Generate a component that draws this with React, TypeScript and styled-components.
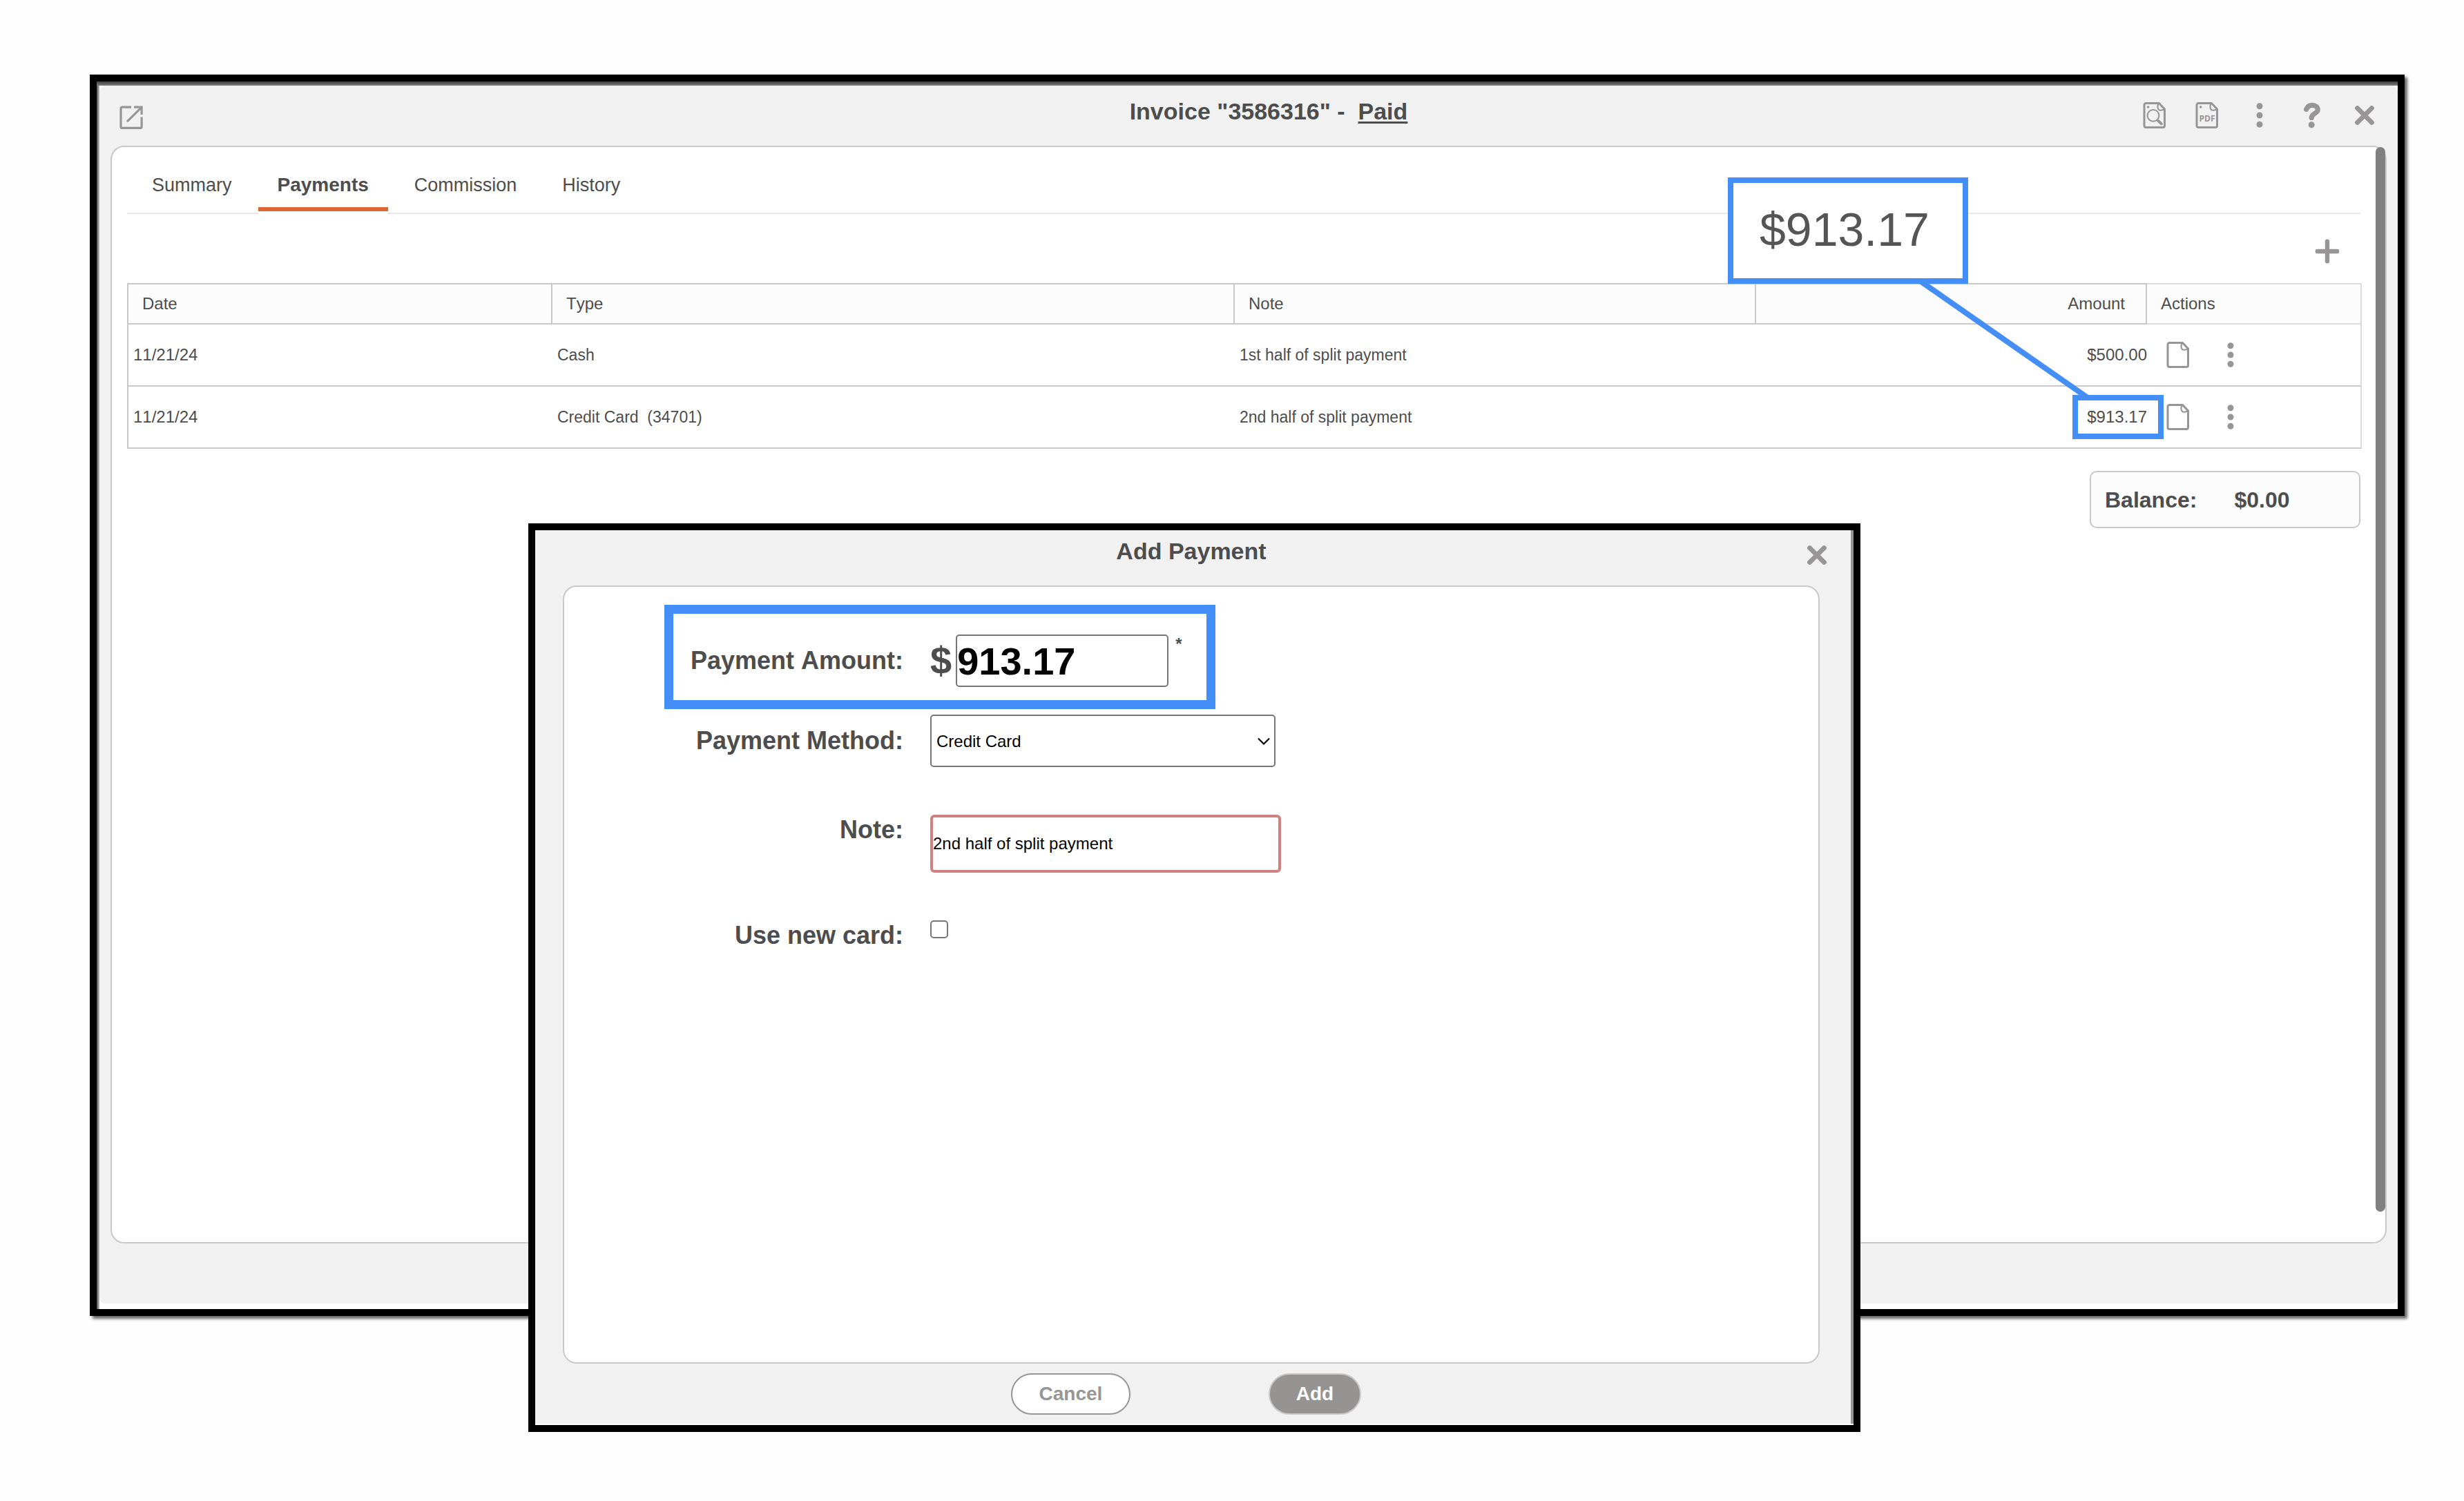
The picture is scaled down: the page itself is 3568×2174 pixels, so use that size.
import React from "react";
import styled, { createGlobalStyle, css } from "styled-components";

const ink = "#4d4d4d";
const iconGrey = "#979595";
const line = "#c9c9c9";
const paleLine = "#dcdcdc";
const chrome = "#f1f1f1";
const accent = "#438ff7";

const GlobalStyle = createGlobalStyle`
  *, *::before, *::after { box-sizing: border-box; }
  body {
    margin: 0;
    background: #fefefe;
    color: ${ink};
    font-family: "Liberation Sans", Arial, Helvetica, sans-serif;
    font-size: 24px;
    font-kerning: none;
  }
  button, input, select { font-family: inherit; }
`;

const Page = styled.div`
  position: relative;
  display: flex;
  flex-direction: column;
  min-height: 100vh;
  padding: 108px 86px 268px 130px;
`;

const InvoiceWindow = styled.section`
  flex: 1;
  display: flex;
  padding: 6px 0 8px 4px;
  border: 10px solid #000;
  background:
    linear-gradient(to bottom, #404040, #7c7c7c) top / 100% 6px no-repeat,
    linear-gradient(to right, #4a4a4a, #c4c4c4) left / 4px 100% no-repeat,
    #fff;
  box-shadow: 4px 4px 4px rgba(0, 0, 0, 0.6);
`;

const Dialog = styled.section`
  position: absolute;
  top: 758px;
  right: 874px;
  bottom: 100px;
  left: 765px;
  display: flex;
  padding: 0 4px 2px 0;
  border: 10px solid #000;
  background:
    linear-gradient(#fff, #fff) bottom / 100% 2px no-repeat,
    #969696;
`;

const Frame = styled.div<{ $radius?: number }>`
  flex: 1;
  min-width: 0;
  display: flex;
  flex-direction: column;
  border-radius: ${(p) => p.$radius ?? 0}px;
  background: ${chrome};
`;

const Header = styled.header<{ $dialog?: boolean }>`
  display: grid;
  grid-template-columns: 1fr auto 1fr;
  align-items: start;
  height: ${(p) => (p.$dialog ? 80 : 87)}px;
  padding: ${(p) => (p.$dialog ? "16px 29px 0 24px" : "23px 28px 0 26px")};
`;

const Title = styled.h1<{ $indent?: number }>`
  grid-column: 2;
  margin: 0;
  padding-left: ${(p) => p.$indent ?? 0}px;
  font-size: 34px;
  line-height: 28px;
  font-weight: 700;
  white-space: pre;
`;

const StatusLink = styled.a`
  color: inherit;
  text-decoration: underline;
  text-decoration-thickness: 3px;
  text-underline-offset: 3px;
`;

const IconRow = styled.div`
  display: flex;
  justify-content: flex-end;
  gap: 36px;
`;

const IconButton = styled.button`
  display: block;
  width: 40px;
  height: 40px;
  padding: 0;
  border: 0;
  background: none;
  color: ${iconGrey};
  cursor: pointer;

  svg {
    display: block;
    overflow: visible;
  }
`;

const cardBase = css`
  flex: 1;
  display: flex;
  flex-direction: column;
  border: 2px solid ${line};
  border-radius: 20px;
  background: #fff;
`;

const InvoiceCard = styled.div`
  ${cardBase}
  position: relative;
  margin: 0 16px 87px;
  padding: 39px 34px 39px 22px;
`;

const ScrollThumb = styled.div`
  position: absolute;
  top: 0;
  right: 0;
  bottom: 44px;
  width: 14px;
  border-radius: 7px;
  background: #808080;
`;

const Tabs = styled.nav`
  display: flex;
  gap: 10px;
  margin-right: 2px;
  padding: 0 8px 2px;
  border-bottom: 2px solid #e8e8e8;
`;

const Tab = styled.button<{ $active?: boolean }>`
  padding: 0 28px 16px;
  border: 0;
  border-bottom: 6px solid ${(p) => (p.$active ? "#dc6636" : "transparent")};
  background: none;
  box-shadow: ${(p) => (p.$active ? "0 4px 0 #fff" : "none")};
  color: ${ink};
  font-size: ${(p) => (p.$active ? 28 : 27)}px;
  line-height: 32px;
  font-weight: ${(p) => (p.$active ? 700 : 400)};
  cursor: pointer;
`;

const Toolbar = styled.div`
  display: flex;
  justify-content: flex-end;
  padding: 34px 30px 26px;
`;

const Table = styled.table`
  width: 100%;
  table-layout: fixed;
  border-collapse: separate;
  border-spacing: 0;
  line-height: 28px;
`;

const Th = styled.th<{ $end?: boolean; $pale?: boolean }>`
  height: 60px;
  padding: 0 ${(p) => (p.$end ? 30 : 20)}px 0 20px;
  border: 2px solid ${(p) => (p.$pale ? paleLine : line)};
  border-left-width: 0;
  background: #fcfcfc;
  font-weight: 400;
  text-align: ${(p) => (p.$end ? "right" : "left")};

  &:first-child {
    border-left-width: 2px;
  }
`;

const Td = styled.td<{ $end?: boolean; $words?: boolean }>`
  position: relative;
  height: 90px;
  padding: 0 0 0 7px;
  border-bottom: 2px solid ${line};
  font-size: ${(p) => (p.$words ? 23 : 24)}px;
  text-align: ${(p) => (p.$end ? "right" : "left")};
  white-space: pre;

  &:first-child {
    border-left: 2px solid ${line};
  }
  &:last-child {
    padding-left: 25px;
    border-right: 2px solid ${paleLine};
  }
`;

const Col = styled.col<{ $width?: number }>`
  width: ${(p) => (p.$width ? `${p.$width}px` : "auto")};
`;

const RowActions = styled.div`
  display: flex;
  gap: 36px;
`;

const Balance = styled.div`
  align-self: flex-end;
  display: flex;
  align-items: center;
  gap: 54px;
  width: 392px;
  height: 83px;
  margin: 32px 2px 0 0;
  padding: 0 20px;
  border: 2px solid ${line};
  border-radius: 10px;
  background: #fcfcfc;
  font-size: 32px;
  line-height: 36px;
  font-weight: 700;
`;

/* Annotations that sit over the table cell and the form row they point at. */
const CellMarker = styled.div`
  position: absolute;
  top: 12px;
  right: -24px;
  width: 132px;
  height: 64px;
  border: 8px solid ${accent};
`;

const Callout = styled.div`
  position: absolute;
  right: 259px;
  bottom: 237px;
  width: 348px;
  height: 154px;
  padding-left: 38px;
  border: 8px solid ${accent};
  background: #fff;
  color: #555;
  font-size: 68px;
  line-height: 134px;
  text-align: left;
`;

const Connector = styled.svg`
  position: absolute;
  top: -150px;
  right: 84px;
  overflow: visible;
`;

const FieldMarker = styled.div`
  position: absolute;
  top: -43px;
  left: 145px;
  width: 798px;
  height: 151px;
  border: 13px solid ${accent};
  pointer-events: none;
`;

const FormCard = styled.form`
  ${cardBase}
  margin: 0 45px 0 40px;
`;

const FieldRow = styled.div<{ $gap?: number; $top?: boolean }>`
  position: relative;
  display: grid;
  grid-template-columns: 491px 1fr;
  column-gap: 39px;
  align-items: ${(p) => (p.$top ? "start" : "center")};
  margin-top: ${(p) => p.$gap ?? 69}px;
`;

const Label = styled.label`
  font-size: 36px;
  line-height: 44px;
  font-weight: 700;
  text-align: right;
`;

const AmountField = styled.div`
  display: flex;
  align-items: center;
`;

const Currency = styled.span`
  margin-right: 6px;
  font-size: 56px;
  line-height: 60px;
  font-weight: 700;
`;

const Required = styled.span`
  align-self: flex-start;
  margin-left: 10px;
  line-height: 28px;
  font-weight: 700;
`;

const fieldBase = css`
  border: 2px solid #767676;
  border-radius: 5px;
  background: #fff;
  color: #000;
  outline: none;
`;

const AmountInput = styled.input`
  ${fieldBase}
  width: 308px;
  height: 76px;
  padding: 0;
  font-size: 56px;
  font-weight: 700;
`;

const SelectWrap = styled.div`
  position: relative;
  width: 500px;

  svg {
    position: absolute;
    top: 33px;
    right: 8px;
    pointer-events: none;
  }
`;

const Select = styled.select`
  ${fieldBase}
  display: block;
  appearance: none;
  width: 100%;
  height: 76px;
  padding: 0 40px 0 7px;
  font-size: 24px;
`;

const NoteInput = styled.input`
  ${fieldBase}
  width: 508px;
  height: 84px;
  padding: 0;
  border: 4px solid #d08080;
  border-radius: 6px;
  font-size: 24px;
`;

const Checkbox = styled.input`
  ${fieldBase}
  appearance: none;
  width: 26px;
  height: 26px;
  margin: 0;

  &:checked {
    background: #767676;
  }
`;

const Footer = styled.footer`
  display: flex;
  justify-content: center;
  gap: 200px;
  height: 87px;
  padding: 14px 20px 0 0;
`;

const PillButton = styled.button<{ $primary?: boolean }>`
  width: ${(p) => (p.$primary ? 134 : 173)}px;
  height: 60px;
  padding: 0;
  border: 2px solid ${(p) => (p.$primary ? line : iconGrey)};
  border-radius: 30px;
  background: ${(p) => (p.$primary ? "#969393" : "#fff")};
  color: ${(p) => (p.$primary ? "#fff" : iconGrey)};
  font-size: 28px;
  line-height: 32px;
  font-weight: 700;
  cursor: pointer;
`;

const Icon = ({ children }: { children: React.ReactNode }) => (
  <svg
    width="40"
    height="40"
    viewBox="0 0 40 40"
    fill="none"
    stroke="currentColor"
    strokeLinecap="round"
    strokeLinejoin="round"
    aria-hidden="true"
  >
    {children}
  </svg>
);

const Sheet = () => (
  <>
    <path
      d="M7.5 2.5H26.5L34.5 11V35A2.5 2.5 0 0 1 32 37.5H7.5A2.5 2.5 0 0 1 5 35V5A2.5 2.5 0 0 1 7.5 2.5Z"
      strokeWidth="3"
    />
    <path d="M26 3C23.4 6 24 12.6 28.6 12.8C31 12.9 33 12 34.4 10.8" strokeWidth="2" />
  </>
);

const Dots = () => (
  <Icon>
    <g fill="currentColor" stroke="none">
      <circle cx="20" cy="6.7" r="4.5" />
      <circle cx="20" cy="20" r="4.5" />
      <circle cx="20" cy="33.3" r="4.5" />
    </g>
  </Icon>
);

const Cross = () => (
  <Icon>
    <path d="M9.6 9.6L30.4 30.4M30.4 9.6L9.6 30.4" strokeWidth="7" />
  </Icon>
);

const OpenIcon = () => (
  <Icon>
    <g strokeWidth="3.2" strokeLinecap="butt" strokeLinejoin="miter">
      <path d="M20 8.2H7A2 2 0 0 0 5 10.2V36.4A2 2 0 0 0 7 38.4H33.1A2 2 0 0 0 35.1 36.4V22.6" />
      <path d="M24 8.2H35.1V19" />
      <path d="M35 8.4L14 29.2" />
    </g>
  </Icon>
);

const payments = [
  { date: "11/21/24", type: "Cash", note: "1st half of split payment", amount: "$500.00", marked: false },
  { date: "11/21/24", type: "Credit Card  (34701)", note: "2nd half of split payment", amount: "$913.17", marked: true },
];

export default function App() {
  return (
    <>
      <GlobalStyle />
      <Page>
        <InvoiceWindow>
          <Frame $radius={8}>
            <Header>
              <IconButton aria-label="Open in new window">
                <OpenIcon />
              </IconButton>
              <Title $indent={60}>
                {'Invoice "3586316" -  '}
                <StatusLink href="#status">Paid</StatusLink>
              </Title>
              <IconRow>
                <IconButton aria-label="Preview">
                  <Icon>
                    <Sheet />
                    <circle cx="10.7" cy="8" r="1.8" fill="currentColor" stroke="none" />
                    <circle cx="18" cy="20.3" r="8.4" strokeWidth="2" />
                    <path d="M25.2 28L29.8 32.4" strokeWidth="4" />
                  </Icon>
                </IconButton>
                <IconButton aria-label="Download PDF">
                  <Icon>
                    <Sheet />
                    <circle cx="10.7" cy="8" r="1.8" fill="currentColor" stroke="none" />
                    <text
                      x="20"
                      y="28.6"
                      textAnchor="middle"
                      fontFamily="Open Sans, sans-serif"
                      fontSize="12"
                      fontWeight="700"
                      fill="currentColor"
                      stroke="none"
                    >
                      PDF
                    </text>
                  </Icon>
                </IconButton>
                <IconButton aria-label="More">
                  <Dots />
                </IconButton>
                <IconButton aria-label="Help">
                  <Icon>
                    <path
                      d="M11.6 11.4C13.4 6.8 17 5.3 20.3 5.3C25 5.3 28.3 8 28.3 12C28.3 17.6 19.2 17 19.2 23.4"
                      strokeWidth="7.2"
                    />
                    <circle cx="19.2" cy="33.8" r="4.5" fill="currentColor" stroke="none" />
                  </Icon>
                </IconButton>
                <IconButton aria-label="Close invoice">
                  <Cross />
                </IconButton>
              </IconRow>
            </Header>

            <InvoiceCard>
              <Tabs>
                <Tab>Summary</Tab>
                <Tab $active>Payments</Tab>
                <Tab>Commission</Tab>
                <Tab>History</Tab>
              </Tabs>
              <Toolbar>
                <IconButton aria-label="Add payment">
                  <Icon>
                    <path d="M20 5.8V34.2M5.8 20H34.2" strokeWidth="6.4" />
                  </Icon>
                </IconButton>
              </Toolbar>
              <Table>
                <colgroup>
                  <Col $width={616} />
                  <Col />
                  <Col $width={755} />
                  <Col $width={566} />
                  <Col $width={311} />
                </colgroup>
                <thead>
                  <tr>
                    <Th>Date</Th>
                    <Th>Type</Th>
                    <Th>Note</Th>
                    <Th $end>Amount</Th>
                    <Th $pale>Actions</Th>
                  </tr>
                </thead>
                <tbody>
                  {payments.map((p) => (
                    <tr key={p.note}>
                      <Td>{p.date}</Td>
                      <Td $words>{p.type}</Td>
                      <Td $words>{p.note}</Td>
                      <Td $end>
                        {p.amount}
                        {p.marked && (
                          <>
                            <Connector width="240" height="166" aria-hidden="true">
                              <path d="M-6 -4L238 166" stroke={accent} strokeWidth="8" />
                            </Connector>
                            <CellMarker />
                            <Callout>{p.amount}</Callout>
                          </>
                        )}
                      </Td>
                      <Td>
                        <RowActions>
                          <IconButton aria-label="Receipt">
                            <Icon>
                              <Sheet />
                            </Icon>
                          </IconButton>
                          <IconButton aria-label="Payment options">
                            <Dots />
                          </IconButton>
                        </RowActions>
                      </Td>
                    </tr>
                  ))}
                </tbody>
              </Table>
              <Balance>
                <span>Balance:</span>
                <span>$0.00</span>
              </Balance>
              <ScrollThumb />
            </InvoiceCard>
          </Frame>
        </InvoiceWindow>

        <Dialog role="dialog" aria-labelledby="add-payment-title">
          <Frame>
            <Header $dialog>
              <Title as="h2" id="add-payment-title">
                Add Payment
              </Title>
              <IconRow>
                <IconButton aria-label="Close dialog">
                  <Cross />
                </IconButton>
              </IconRow>
            </Header>
            <FormCard id="payment-form" onSubmit={(e) => e.preventDefault()}>
              <FieldRow>
                <Label htmlFor="amount">Payment Amount:</Label>
                <AmountField>
                  <Currency>$</Currency>
                  <AmountInput id="amount" defaultValue="913.17" />
                  <Required>*</Required>
                </AmountField>
                <FieldMarker />
              </FieldRow>
              <FieldRow $gap={40}>
                <Label htmlFor="method">Payment Method:</Label>
                <SelectWrap>
                  <Select id="method" defaultValue="Credit Card">
                    <option>Credit Card</option>
                  </Select>
                  <svg width="18" height="12" viewBox="0 0 18 12" fill="none" aria-hidden="true">
                    <path d="M1 1.5L9 9.5L17 1.5" stroke="#000" strokeWidth="2.2" />
                  </svg>
                </SelectWrap>
              </FieldRow>
              <FieldRow $top>
                <Label htmlFor="note">Note:</Label>
                <NoteInput id="note" defaultValue="2nd half of split payment" />
              </FieldRow>
              <FieldRow $top>
                <Label htmlFor="new-card">Use new card:</Label>
                <Checkbox id="new-card" type="checkbox" />
              </FieldRow>
            </FormCard>
            <Footer>
              <PillButton type="button">Cancel</PillButton>
              <PillButton type="submit" form="payment-form" $primary>
                Add
              </PillButton>
            </Footer>
          </Frame>
        </Dialog>
      </Page>
    </>
  );
}
